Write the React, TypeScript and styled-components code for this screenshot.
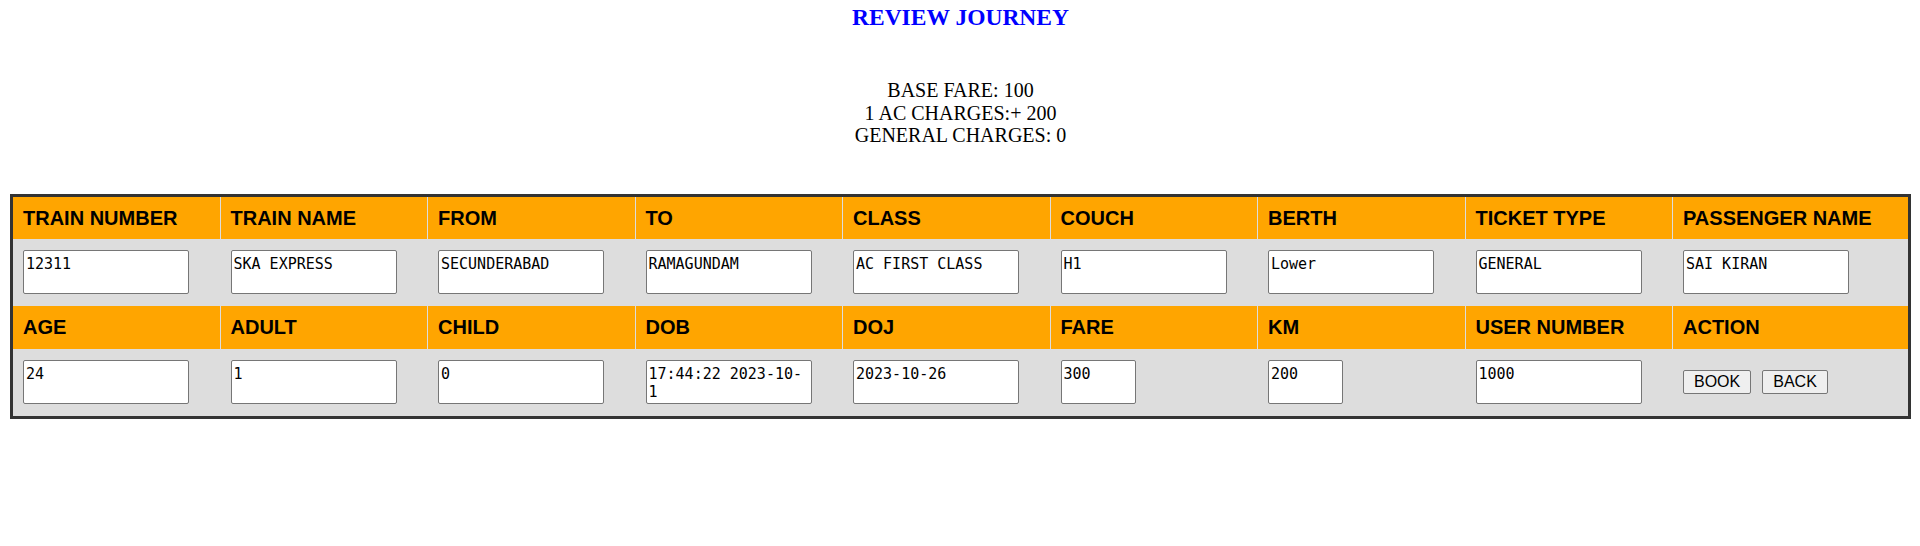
import styled, { createGlobalStyle } from 'styled-components';

const GlobalStyle = createGlobalStyle`
  * {
    box-sizing: border-box;
  }
  body {
    margin: 0;
    background: #ffffff;
    font-family: 'Liberation Serif', 'Times New Roman', serif;
  }
`;

interface Field {
  label: string;
  value?: string;
  narrow?: boolean;
  action?: boolean;
}

const firstRow: Field[] = [
  { label: 'TRAIN NUMBER', value: '12311' },
  { label: 'TRAIN NAME', value: 'SKA EXPRESS' },
  { label: 'FROM', value: 'SECUNDERABAD' },
  { label: 'TO', value: 'RAMAGUNDAM' },
  { label: 'CLASS', value: 'AC FIRST CLASS' },
  { label: 'COUCH', value: 'H1' },
  { label: 'BERTH', value: 'Lower' },
  { label: 'TICKET TYPE', value: 'GENERAL' },
  { label: 'PASSENGER NAME', value: 'SAI KIRAN' },
];

const secondRow: Field[] = [
  { label: 'AGE', value: '24' },
  { label: 'ADULT', value: '1' },
  { label: 'CHILD', value: '0' },
  { label: 'DOB', value: '17:44:22 2023-10-1' },
  { label: 'DOJ', value: '2023-10-26' },
  { label: 'FARE', value: '300', narrow: true },
  { label: 'KM', value: '200', narrow: true },
  { label: 'USER NUMBER', value: '1000' },
  { label: 'ACTION', action: true },
];

const Page = styled.div`
  padding: 4px 9px 0 10px;
`;

const Title = styled.h2`
  margin: 0;
  text-align: center;
  color: #0000ff;
  font-size: 23.5px;
  font-weight: 700;
  line-height: 27px;
`;

const Summary = styled.div`
  margin: 48px 0 47px;
  text-align: center;
  font-size: 20px;
  line-height: 22.5px;
  color: #000;
`;

const Table = styled.table`
  width: 100%;
  table-layout: fixed;
  border-collapse: separate;
  border-spacing: 0;
  border: 3px solid #333333;
  font-family: 'Liberation Sans', Arial, sans-serif;
`;

const HeadCell = styled.th<{ $wide?: boolean; $last?: boolean }>`
  width: ${({ $wide }) => ($wide ? '12.4%' : '10.95%')};
  padding: 10px 10px 9.5px;
  background: #ffa500;
  color: #000;
  font-size: 20px;
  font-weight: 700;
  line-height: normal;
  text-align: left;
  white-space: nowrap;
  border-right: ${({ $last }) => ($last ? 'none' : '1px solid #dddddd')};
`;

const DataCell = styled.td<{ $last?: boolean }>`
  padding: 11px 10px 12px;
  background: #dddddd;
  vertical-align: middle;
  border-right: ${({ $last }) => ($last ? 'none' : '1px solid #dddddd')};
`;

const Box = styled.textarea<{ $narrow?: boolean }>`
  display: block;
  width: ${({ $narrow }) => ($narrow ? '75px' : '166px')};
  height: 44px;
  margin: 0;
  padding: 4px 2px 2px;
  border: 1px solid #767676;
  border-radius: 2px;
  background: #ffffff;
  color: #000;
  font-family: 'DejaVu Sans Mono', 'Liberation Mono', monospace;
  font-size: 15px;
  line-height: normal;
  resize: none;
  overflow: hidden;
`;

const Actions = styled.div`
  display: flex;
  gap: 11px;
  align-items: center;
`;

const Button = styled.button`
  padding: 2px 10px;
  border: 1px solid #767676;
  border-radius: 2px;
  background: #efefef;
  color: #000;
  font-family: 'Liberation Sans', Arial, sans-serif;
  font-size: 16px;
  line-height: normal;
  cursor: pointer;
`;

function FieldRows({ fields, withWidths }: { fields: Field[]; withWidths?: boolean }) {
  return (
    <>
      <tr>
        {fields.map((f, i) => (
          <HeadCell
            key={f.label}
            $wide={withWidths && i === fields.length - 1}
            $last={i === fields.length - 1}
          >
            {f.label}
          </HeadCell>
        ))}
      </tr>
      <tr>
        {fields.map((f, i) => (
          <DataCell key={f.label} $last={i === fields.length - 1}>
            {f.action ? (
              <Actions>
                <Button>BOOK</Button>
                <Button>BACK</Button>
              </Actions>
            ) : (
              <Box $narrow={f.narrow} defaultValue={f.value} readOnly />
            )}
          </DataCell>
        ))}
      </tr>
    </>
  );
}

export default function App() {
  return (
    <>
      <GlobalStyle />
      <Page>
        <Title>REVIEW JOURNEY</Title>
        <Summary>
          <div>BASE FARE: 100</div>
          <div>1 AC CHARGES:+ 200</div>
          <div>GENERAL CHARGES: 0</div>
        </Summary>
        <Table>
          <tbody>
            <FieldRows fields={firstRow} withWidths />
            <FieldRows fields={secondRow} />
          </tbody>
        </Table>
      </Page>
    </>
  );
}
